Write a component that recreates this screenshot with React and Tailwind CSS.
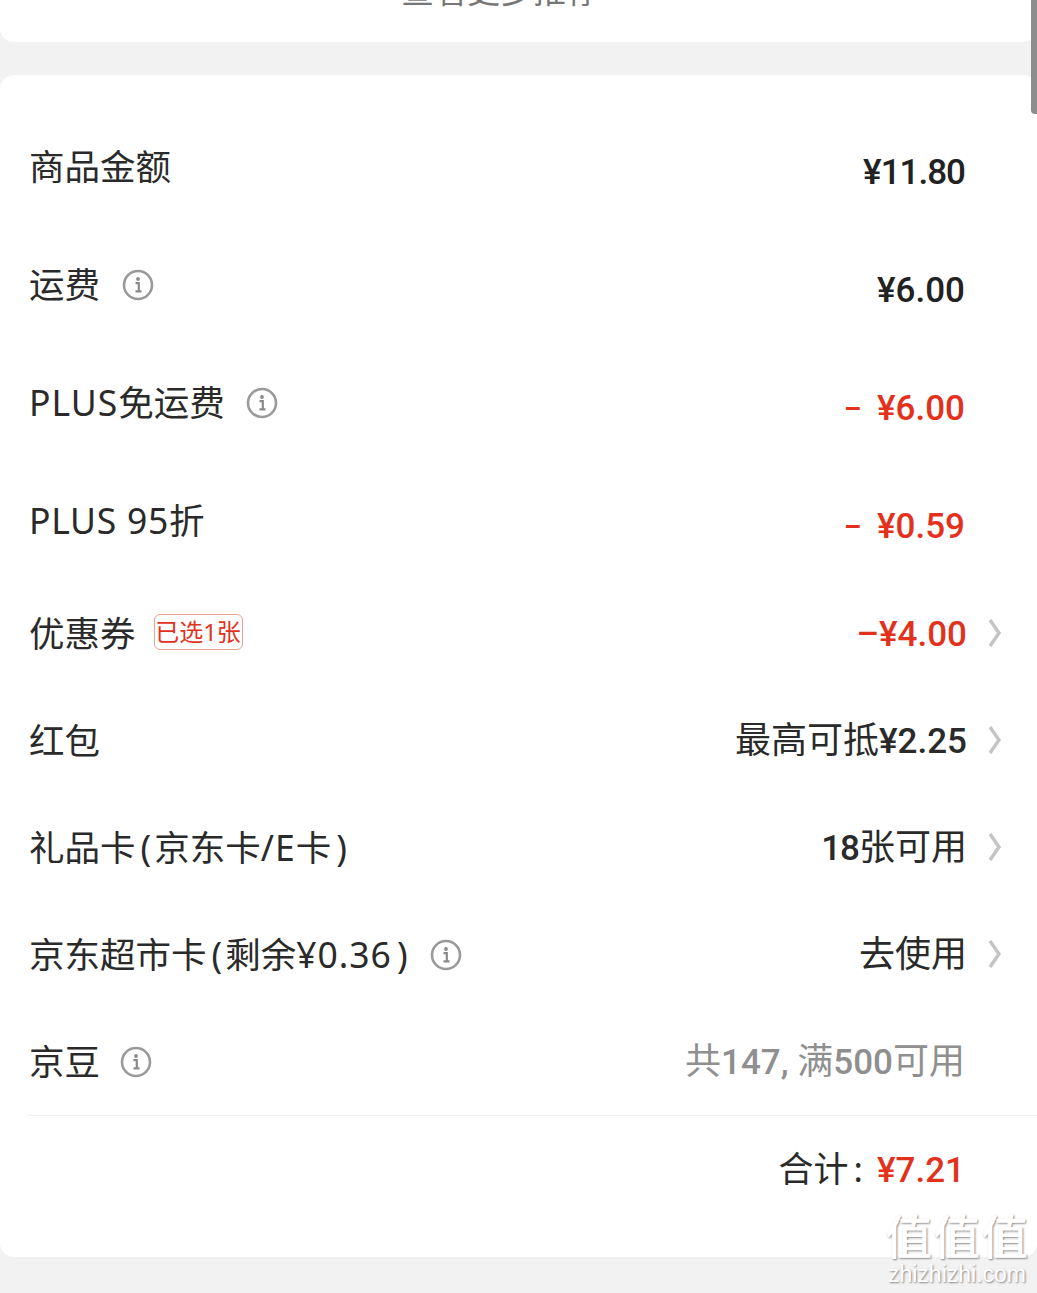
import React from "react";

const CJK = "font-['Noto_Sans','Noto_Sans_CJK_SC',sans-serif]";
const NUM = "font-['Roboto','Noto_Sans_CJK_SC',sans-serif]";

function InfoIcon() {
  return (
    <svg width="32" height="32" viewBox="0 0 32 32" fill="none" className="shrink-0">
      <circle cx="16" cy="16" r="14" stroke="#9a9a9a" strokeWidth="2.6" />
      <circle cx="16" cy="10" r="1.9" fill="#8a8a8a" />
      <path d="M13.5 14.2h3.3v8M13.5 22.4h6" stroke="#8a8a8a" strokeWidth="2.2" />
    </svg>
  );
}

function Chevron() {
  return (
    <svg width="14" height="30" viewBox="0 0 14 30" fill="none" className="shrink-0 -mt-[3px]">
      <path d="M2 2l9 13-9 13" stroke="#c4c4c4" strokeWidth="3.4" />
    </svg>
  );
}

// latin bits in the labels sit wider than the CJK font's own
function Wide({ children }) {
  return <span className="tracking-[1px]">{children}</span>;
}

function Paren({ children, left }) {
  return <span className={left ? "ml-[5px] mr-[3px]" : "ml-[5px]"}>{children}</span>;
}

function Row({ tall, label, info, badge, gap = "gap-[22px]", children, chevron }) {
  return (
    <div className={`flex items-center justify-between pl-[29px] ${tall ? "h-[118px]" : "h-[107px]"}`}>
      <div className={`flex items-center pb-[2px] ${gap}`}>
        <span className="text-[35.5px] leading-none text-[#2a2a2a] whitespace-pre">{label}</span>
        {info && <InfoIcon />}
        {badge && (
          <span className="flex h-[36px] w-[89px] items-center justify-center rounded-[6px] border border-[#e9a192] text-[24px] leading-none text-[#e2321d] -ml-[4px] mb-[3px]">
            已选1张
          </span>
        )}
      </div>
      <div className={`flex items-center ${chevron ? "pr-[35px] gap-[21px]" : "pr-[72px]"}`}>
        {children}
        {chevron && <Chevron />}
      </div>
    </div>
  );
}

export default function App() {
  const val = `${NUM} text-[35px] leading-none font-medium whitespace-pre`;
  const han = `font-normal text-[36px] font-['Noto_Sans_CJK_SC',sans-serif]`;
  const dash = "text-[27px] font-bold align-[2px]";
  return (
    <div className={`relative h-[1293px] w-[1037px] overflow-hidden bg-[#f2f2f2] ${CJK}`}>
      {/* top card */}
      <div className="h-[42px] rounded-b-[14px] bg-white overflow-hidden relative">
        <p className="absolute left-0 right-[37px] -top-[25px] text-center text-[33px] leading-[32px] text-[#777]">
          查看更多推荐
        </p>
      </div>

      {/* price card */}
      <div className="mt-[33px] h-[1182px] rounded-[14px] bg-white pt-[34px]">
        <Row tall label="商品金额">
          <span className={`${val} text-[#222] pt-2 tracking-[-1px]`}>¥11.80</span>
        </Row>
        <Row tall label="运费" info>
          <span className={`${val} text-[#222] pt-2`}>¥6.00</span>
        </Row>
        <Row tall label={<><Wide>PLUS</Wide>免运费</>} info gap="gap-[21px]">
          <span className={`${val} text-[#e2321d] pt-2`}><span className={`${dash} mr-[16px]`}>–</span>¥6.00</span>
        </Row>
        <Row tall label={<span className="tracking-[0.7px]">PLUS 95<span className="tracking-normal">折</span></span>}>
          <span className={`${val} text-[#e2321d] pt-2`}><span className={`${dash} mr-[16px]`}>–</span>¥0.59</span>
        </Row>
        <Row label="优惠券" badge chevron>
          <span className={`${val} text-[#e2321d]`}>–¥4.00</span>
        </Row>
        <Row label="红包" chevron>
          <span className={`${val} text-[#2a2a2a] pb-[6px]`}><span className={han}>最高可抵</span>¥2.25</span>
        </Row>
        <Row label={<>礼品卡<Paren left>(</Paren>京东卡<Wide>/E</Wide>卡<Paren>)</Paren></>} chevron>
          <span className={`${val} text-[#2a2a2a] pb-[6px]`}><span className="tracking-[-1px]">18</span><span className={han}>张可用</span></span>
        </Row>
        <Row label={<>京东超市卡<Paren left>(</Paren>剩余<Wide>¥0.36</Wide><Paren>)</Paren></>} info chevron>
          <span className={`${val} text-[#2a2a2a] pb-[6px]`}><span className={han}>去使用</span></span>
        </Row>
        <Row label="京豆" info gap="gap-[20px]">
          <span className={`${val} text-[#8f8f8f] pb-[6px]`}><span className={han}>共</span>147, <span className={han}>满</span>500<span className={han}>可用</span></span>
        </Row>

        <div className="-mt-px ml-[28px] border-t border-[#f0f0f0] h-[110px] flex items-center justify-end pr-[72px]">
          <span className="text-[35px] leading-none text-[#2a2a2a] mr-[14px] pb-[5px] whitespace-pre">合计<span className="ml-[5px]">:</span></span>
          <span className={`${val} text-[#e2321d]`}>¥7.21</span>
        </div>
      </div>

      {/* scrollbar */}
      <div className="absolute right-0 top-0 h-[114px] w-[6px] rounded-bl-[4px] bg-[#8d8d8d]" />

      {/* watermark */}
      <div className="absolute right-[7px] top-[1206px] flex w-[146px] flex-col items-center text-white [text-shadow:1px_1px_2px_rgba(0,0,0,0.45)]">
        <span className="font-['Noto_Sans_CJK_SC',sans-serif] font-medium text-[47px] leading-[56px] tracking-[1px] whitespace-nowrap">值值值</span>
        <span className="font-['Liberation_Sans',sans-serif] text-[23px] leading-[24px] whitespace-nowrap">zhizhizhi.com</span>
      </div>
    </div>
  );
}
